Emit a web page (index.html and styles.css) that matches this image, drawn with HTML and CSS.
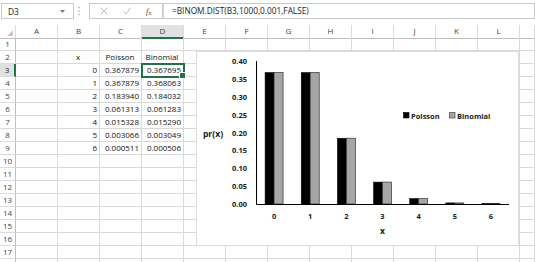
FILE: index.html
```html
<!DOCTYPE html>
<html>
<head>
<meta charset="utf-8">
<link rel="stylesheet" href="styles.css">
</head>
<body>
<div class="fbar">
  <div class="namebox"><span>D3</span><svg class="dd" width="5" height="3" viewBox="0 0 5 3"><path d="M0 0H5L2.5 3Z" fill="#7a7a7a"/></svg></div>
  <div class="dots"><svg width="15" height="16" viewBox="0 0 15 16"><circle cx="5" cy="4.5" r="0.8" fill="#a8a8a8"/><circle cx="5" cy="8" r="0.8" fill="#a8a8a8"/><circle cx="5" cy="11.5" r="0.8" fill="#a8a8a8"/></svg></div>
  <div class="fxbox">
    <svg width="8" height="8" viewBox="0 0 8 8"><path d="M0.5 0.5L7.5 7.5M7.5 0.5L0.5 7.5" stroke="#b8b8b8" stroke-width="0.9" fill="none"/></svg>
    <svg width="8" height="8" viewBox="0 0 8 8"><path d="M0.5 4.5L3 7L7.5 0.5" stroke="#b8b8b8" stroke-width="0.9" fill="none"/></svg>
    <span class="fx"><i>f</i><sub>x</sub></span>
  </div>
  <div class="formula">=BINOM.DIST(B3,1000,0.001,FALSE)</div>
</div>

<div class="sheet">
  <div class="row hdr"><div class="corner"><svg width="6" height="6" viewBox="0 0 6 6"><path d="M6 0V6H0Z" fill="#c8c8c8"/></svg></div><div class="ch">A</div><div class="ch">B</div><div class="ch">C</div><div class="ch selh">D</div><div class="ch">E</div><div class="ch">F</div><div class="ch">G</div><div class="ch">H</div><div class="ch">I</div><div class="ch">J</div><div class="ch">K</div><div class="ch">L</div><div class="ch"></div></div>
  <div class="row"><div class="rh">1</div><div class="c"></div><div class="c"></div><div class="c"></div><div class="c"></div><div class="c"></div><div class="c"></div><div class="c"></div><div class="c"></div><div class="c"></div><div class="c"></div><div class="c"></div><div class="c"></div><div class="c"></div></div>
  <div class="row"><div class="rh">2</div><div class="c"></div><div class="c ctr">x</div><div class="c ctr">Poisson</div><div class="c ctr">Binomial</div><div class="c"></div><div class="c"></div><div class="c"></div><div class="c"></div><div class="c"></div><div class="c"></div><div class="c"></div><div class="c"></div><div class="c"></div></div>
  <div class="row"><div class="rh selr">3</div><div class="c"></div><div class="c num">0</div><div class="c num">0.367879</div><div class="c num sel">0.367695</div><div class="c"></div><div class="c"></div><div class="c"></div><div class="c"></div><div class="c"></div><div class="c"></div><div class="c"></div><div class="c"></div><div class="c"></div></div>
  <div class="row"><div class="rh">4</div><div class="c"></div><div class="c num">1</div><div class="c num">0.367879</div><div class="c num">0.368063</div><div class="c"></div><div class="c"></div><div class="c"></div><div class="c"></div><div class="c"></div><div class="c"></div><div class="c"></div><div class="c"></div><div class="c"></div></div>
  <div class="row"><div class="rh">5</div><div class="c"></div><div class="c num">2</div><div class="c num">0.183940</div><div class="c num">0.184032</div><div class="c"></div><div class="c"></div><div class="c"></div><div class="c"></div><div class="c"></div><div class="c"></div><div class="c"></div><div class="c"></div><div class="c"></div></div>
  <div class="row"><div class="rh">6</div><div class="c"></div><div class="c num">3</div><div class="c num">0.061313</div><div class="c num">0.061283</div><div class="c"></div><div class="c"></div><div class="c"></div><div class="c"></div><div class="c"></div><div class="c"></div><div class="c"></div><div class="c"></div><div class="c"></div></div>
  <div class="row"><div class="rh">7</div><div class="c"></div><div class="c num">4</div><div class="c num">0.015328</div><div class="c num">0.015290</div><div class="c"></div><div class="c"></div><div class="c"></div><div class="c"></div><div class="c"></div><div class="c"></div><div class="c"></div><div class="c"></div><div class="c"></div></div>
  <div class="row"><div class="rh">8</div><div class="c"></div><div class="c num">5</div><div class="c num">0.003066</div><div class="c num">0.003049</div><div class="c"></div><div class="c"></div><div class="c"></div><div class="c"></div><div class="c"></div><div class="c"></div><div class="c"></div><div class="c"></div><div class="c"></div></div>
  <div class="row"><div class="rh">9</div><div class="c"></div><div class="c num">6</div><div class="c num">0.000511</div><div class="c num">0.000506</div><div class="c"></div><div class="c"></div><div class="c"></div><div class="c"></div><div class="c"></div><div class="c"></div><div class="c"></div><div class="c"></div><div class="c"></div></div>
  <div class="row"><div class="rh">10</div><div class="c"></div><div class="c"></div><div class="c"></div><div class="c"></div><div class="c"></div><div class="c"></div><div class="c"></div><div class="c"></div><div class="c"></div><div class="c"></div><div class="c"></div><div class="c"></div><div class="c"></div></div>
  <div class="row"><div class="rh">11</div><div class="c"></div><div class="c"></div><div class="c"></div><div class="c"></div><div class="c"></div><div class="c"></div><div class="c"></div><div class="c"></div><div class="c"></div><div class="c"></div><div class="c"></div><div class="c"></div><div class="c"></div></div>
  <div class="row"><div class="rh">12</div><div class="c"></div><div class="c"></div><div class="c"></div><div class="c"></div><div class="c"></div><div class="c"></div><div class="c"></div><div class="c"></div><div class="c"></div><div class="c"></div><div class="c"></div><div class="c"></div><div class="c"></div></div>
  <div class="row"><div class="rh">13</div><div class="c"></div><div class="c"></div><div class="c"></div><div class="c"></div><div class="c"></div><div class="c"></div><div class="c"></div><div class="c"></div><div class="c"></div><div class="c"></div><div class="c"></div><div class="c"></div><div class="c"></div></div>
  <div class="row"><div class="rh">14</div><div class="c"></div><div class="c"></div><div class="c"></div><div class="c"></div><div class="c"></div><div class="c"></div><div class="c"></div><div class="c"></div><div class="c"></div><div class="c"></div><div class="c"></div><div class="c"></div><div class="c"></div></div>
  <div class="row"><div class="rh">15</div><div class="c"></div><div class="c"></div><div class="c"></div><div class="c"></div><div class="c"></div><div class="c"></div><div class="c"></div><div class="c"></div><div class="c"></div><div class="c"></div><div class="c"></div><div class="c"></div><div class="c"></div></div>
  <div class="row"><div class="rh">16</div><div class="c"></div><div class="c"></div><div class="c"></div><div class="c"></div><div class="c"></div><div class="c"></div><div class="c"></div><div class="c"></div><div class="c"></div><div class="c"></div><div class="c"></div><div class="c"></div><div class="c"></div></div>
  <div class="row"><div class="rh">17</div><div class="c"></div><div class="c"></div><div class="c"></div><div class="c"></div><div class="c"></div><div class="c"></div><div class="c"></div><div class="c"></div><div class="c"></div><div class="c"></div><div class="c"></div><div class="c"></div><div class="c"></div></div>
  <div class="row"><div class="rh"></div><div class="c"></div><div class="c"></div><div class="c"></div><div class="c"></div><div class="c"></div><div class="c"></div><div class="c"></div><div class="c"></div><div class="c"></div><div class="c"></div><div class="c"></div><div class="c"></div><div class="c"></div></div>
</div>

<div class="chart">
  <svg width="323" height="195" viewBox="0 0 323 195">
    <rect x="0.5" y="0.5" width="322" height="194" fill="#fff" stroke="#dcdcdc"/>
    <g class="ylab" text-anchor="end">
      <text x="51" y="10">0.40</text>
      <text x="51" y="27.9">0.35</text>
      <text x="51" y="45.75">0.30</text>
      <text x="51" y="63.6">0.25</text>
      <text x="51" y="81.5">0.20</text>
      <text x="51" y="99.4">0.15</text>
      <text x="51" y="117.25">0.10</text>
      <text x="51" y="135.1">0.05</text>
      <text x="51" y="153">0.00</text>
    </g>
    <text class="ytitle" x="17" y="82.5" text-anchor="middle">pr(x)</text>
    <g class="bars">
      <rect class="p" x="69.07" y="21.48" width="9" height="131.52"/>
      <rect class="b" x="78.07" y="21.55" width="9" height="131.45"/>
      <rect class="p" x="105.21" y="21.48" width="9" height="131.52"/>
      <rect class="b" x="114.21" y="21.42" width="9" height="131.58"/>
      <rect class="p" x="141.36" y="87.24" width="9" height="65.76"/>
      <rect class="b" x="150.36" y="87.21" width="9" height="65.79"/>
      <rect class="p" x="177.5" y="131.08" width="9" height="21.92"/>
      <rect class="b" x="186.5" y="131.09" width="9" height="21.91"/>
      <rect class="p" x="213.64" y="147.52" width="9" height="5.48"/>
      <rect class="b" x="222.64" y="147.53" width="9" height="5.47"/>
      <rect class="p" x="249.79" y="151.9" width="9" height="1.1"/>
      <rect class="b" x="258.79" y="151.91" width="9" height="1.09"/>
      <rect class="p" x="285.93" y="152.6" width="9" height="0.4"/>
      <rect class="b" x="294.93" y="152.6" width="9" height="0.4"/>
    </g>
    <path d="M60.5 10V153.5H313" stroke="#000" stroke-width="1" fill="none"/>
    <g class="xlab" text-anchor="middle">
      <text x="78.07" y="165">0</text>
      <text x="114.21" y="165">1</text>
      <text x="150.36" y="165">2</text>
      <text x="186.5" y="165">3</text>
      <text x="222.64" y="165">4</text>
      <text x="258.79" y="165">5</text>
      <text x="294.93" y="165">6</text>
    </g>
    <text class="xtitle" x="186.5" y="179.5" text-anchor="middle">x</text>
    <g class="legend">
      <rect x="207.5" y="61.5" width="5.5" height="5.5" fill="#000" stroke="#000" stroke-width="0.6"/>
      <text x="215" y="64.5">Poisson</text>
      <rect x="253.5" y="61.5" width="5.5" height="5.5" fill="#a6a6a6" stroke="#333" stroke-width="0.6"/>
      <text x="261" y="64.5">Binomial</text>
    </g>
  </svg>
</div>
</body>
</html>
```

FILE: styles.css
```css
* {
  box-sizing: border-box;
  margin: 0;
  padding: 0;
}

body {
  margin: 0;
  width: 535px;
  height: 262px;
  overflow: hidden;
  background: #fff;
  position: relative;
  font-family: "Open Sans", "Liberation Sans", sans-serif;
  color: #000;
}

/* formula bar */
.fbar {
  display: flex;
  align-items: flex-start;
  height: 25px;
  padding-top: 3px;
  padding-left: 1px;
}

.namebox {
  width: 73px;
  height: 16px;
  border: 1px solid #c9c9c9;
  display: flex;
  align-items: center;
  justify-content: space-between;
  padding: 0 8px 0 6px;
  font-size: 8.4px;
  color: #222;
}

.dots {
  width: 15px;
  height: 16px;
  display: flex;
}

.fxbox {
  width: 74px;
  height: 16px;
  border: 1px solid #c9c9c9;
  display: flex;
  align-items: center;
  padding-left: 10px;
  gap: 15px;
}

.fx {
  font-family: "Liberation Serif", serif;
  font-size: 9px;
  color: #555;
  line-height: 1;
}

.fx sub {
  font-size: 6px;
  vertical-align: -1px;
  font-style: normal;
}

.formula {
  flex: 1;
  height: 16px;
  border: 1px solid #c9c9c9;
  border-left-color: #d6d6d6;
  padding-left: 8px;
  font-size: 8.3px;
  line-height: 14px;
  color: #222;
  white-space: nowrap;
}

/* sheet grid */
.row {
  display: grid;
  grid-template-columns: 16px repeat(12, 42px) 1fr;
  height: 13px;
}

.c {
  border-right: 1px solid #d9d9d9;
  border-bottom: 1px solid #d9d9d9;
  font-size: 8px;
  line-height: 12px;
  white-space: nowrap;
  overflow: visible;
  padding: 0 2px 0 1px;
  color: #111;
}

.num {
  text-align: right;
}

.ctr {
  text-align: center;
}

.sel {
  position: relative;
  outline: 2px solid #217346;
  outline-offset: -1px;
}

.sel::after {
  content: "";
  position: absolute;
  right: -3px;
  bottom: -3px;
  width: 5px;
  height: 5px;
  background: #217346;
  border: 1px solid #fff;
}

.hdr .ch,
.corner {
  border-right: 1px solid #dcdcdc;
  border-bottom: 1px solid #bfbfbf;
  font-size: 8px;
  line-height: 12px;
  text-align: center;
  color: #444;
  background: #fff;
}

.corner {
  display: flex;
  align-items: flex-end;
  justify-content: flex-end;
  padding: 0 2px 2px 0;
}

.selh {
  background: #e1e1e1 !important;
  border-bottom: 2px solid #217346 !important;
  color: #262626;
}

.rh {
  border-right: 1px solid #bfbfbf;
  border-bottom: 1px solid #dcdcdc;
  font-size: 8px;
  line-height: 12px;
  text-align: center;
  color: #444;
}

.selr {
  background: #e1e1e1;
  border-right: 2px solid #217346;
  color: #262626;
}

/* chart overlay */
.chart {
  position: absolute;
  left: 196px;
  top: 51px;
  width: 323px;
  height: 195px;
}

.chart svg {
  display: block;
}

.chart text {
  font-family: "Open Sans", "Liberation Sans", sans-serif;
  font-weight: 700;
  fill: #1a1a1a;
  dominant-baseline: central;
}

.ylab text,
.xlab text {
  font-size: 7.5px;
}

.ytitle,
.xtitle {
  font-size: 8.6px;
}

.legend text {
  font-size: 7.5px;
}

.bars .p {
  fill: #000;
  stroke: #000;
  stroke-width: 0.5;
}

.bars .b {
  fill: #a6a6a6;
  stroke: #333;
  stroke-width: 0.7;
}
```
